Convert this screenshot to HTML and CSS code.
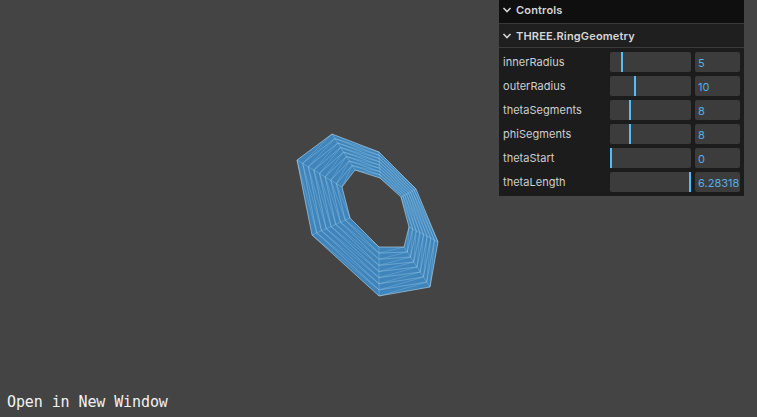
FILE: index.html
```html
<!DOCTYPE html>
<html lang="en">
<head>
<meta charset="utf-8">
<title>THREE.RingGeometry</title>
<link rel="stylesheet" href="styles.css">
</head>
<body>
<svg class="scene" id="scene" width="757" height="417" viewBox="0 0 757 417" aria-hidden="true"></svg>
<aside class="panel">
  <div class="head head-root">
    <svg class="chev" width="8" height="6" viewBox="0 0 8 6"><path d="M.5 .9 4 4.6 7.5 .9"/></svg>
    <span>Controls</span>
  </div>
  <div class="head head-folder">
    <svg class="chev" width="8" height="6" viewBox="0 0 8 6"><path d="M.5 .9 4 4.6 7.5 .9"/></svg>
    <span>THREE.RingGeometry</span>
  </div>
  <div class="rows">
    <span class="label">innerRadius</span><div class="slider"><i class="mark" style="left:13.6%"></i></div><div class="value">5</div>
    <span class="label">outerRadius</span><div class="slider"><i class="mark" style="left:29.6%"></i></div><div class="value">10</div>
    <span class="label">thetaSegments</span><div class="slider"><i class="mark" style="left:23.5%"></i></div><div class="value">8</div>
    <span class="label">phiSegments</span><div class="slider"><i class="mark" style="left:23.5%"></i></div><div class="value">8</div>
    <span class="label">thetaStart</span><div class="slider"><i class="mark" style="left:0"></i></div><div class="value">0</div>
    <span class="label">thetaLength</span><div class="slider"><i class="mark" style="left:97.5%"></i></div><div class="value">6.28318</div>
  </div>
</aside>
<a class="open" href="#">Open in New Window</a>
<script src="ring.js"></script>
</body>
</html>
```
FILE: styles.css
```css
* { box-sizing: border-box; }
html, body { margin: 0; height: 100%; }
body {
  background: #444444;
  overflow: hidden;
  position: relative;
  font-family: Inter, "Liberation Sans", sans-serif;
}
.scene { position: absolute; left: 0; top: 0; display: block; }
.panel {
  position: absolute;
  left: 499px;
  top: 0;
  width: 245px;
  background: #1c1c1c;
  color: #cfcfcf;
  font-size: 11px;
  letter-spacing: 0.03px;
}
.head {
  height: 24px;
  display: flex;
  align-items: center;
  gap: 5px;
  padding-left: 4px;
  border-bottom: 1px solid #3a3a3a;
  font-weight: 600;
  letter-spacing: 0.17px;
  color: #d6d6d6;
}
.head-root { background: #0f0f0f; padding-bottom: 3px; }
.head-folder { background: #1f1f1f; padding-top: 1px; }
.chev { fill: none; stroke: #d6d6d6; stroke-width: 1.5; flex: none; }
.rows {
  display: grid;
  grid-template-columns: 103px 81px 45px;
  grid-auto-rows: 20px;
  gap: 4px;
  padding: 4px;
  align-items: center;
}
.label { white-space: nowrap; }
.slider {
  position: relative;
  height: 20px;
  background: #3c3c3c;
  border-radius: 2px;
}
.mark {
  position: absolute;
  top: 0;
  bottom: 0;
  width: 2px;
  background: #55bdf5;
}
.value {
  height: 20px;
  line-height: 22px;
  padding-left: 3px;
  background: #3c3c3c;
  border-radius: 2px;
  color: #58aee3;
  white-space: nowrap;
  overflow: hidden;
}
.open {
  position: absolute;
  left: 7px;
  top: 393px;
  color: #f2f2f2;
  text-decoration: none;
  letter-spacing: -0.1px;
  font: 15px/18px "DejaVu Sans Mono", monospace;
}
```
FILE: ring.js
```js
var outer = [[297,160],[332,134],[379,152],[416,189],[438,242],[430,287],[379,296],[312,235]];
var inner = [[342,187],[355,170],[380,178],[401,197],[409,227],[404,247],[379,247],[350,218]];
var NS = "http://www.w3.org/2000/svg";
var svg = document.getElementById("scene");
var N = 8, PHI = 8;

function lerp(a, b, t) { return [a[0] + (b[0] - a[0]) * t, a[1] + (b[1] - a[1]) * t]; }
function add(tag, attrs) {
  var el = document.createElementNS(NS, tag);
  for (var k in attrs) el.setAttribute(k, attrs[k]);
  svg.appendChild(el);
}
function pts(list) { return list.map(function (p) { return p[0] + "," + p[1]; }).join(" "); }
function line(a, b, color, width, opacity) {
  add("line", { x1: a[0], y1: a[1], x2: b[0], y2: b[1], stroke: color, "stroke-width": width, "stroke-opacity": opacity });
}

var rings = [];
for (var r = 0; r <= PHI; r++) {
  rings.push(inner.map(function (p, i) { return lerp(p, outer[i], r / PHI); }));
}

add("path", {
  d: "M" + outer.map(function (p) { return p.join(" "); }).join("L") + "Z" +
     "M" + inner.map(function (p) { return p.join(" "); }).join("L") + "Z",
  fill: "#3f85bb",
  "fill-rule": "evenodd"
});

for (var k = 0; k < PHI; k++) {
  for (var i = 0; i < N; i++) {
    line(rings[k][i], rings[k + 1][(i + 1) % N], "#9ccbea", 0.6, 0.5);
  }
}
for (var m = 1; m < PHI; m++) {
  add("polygon", { points: pts(rings[m]), fill: "none", stroke: "#a9d3ee", "stroke-width": 0.7, "stroke-opacity": 0.55 });
}
for (var s = 0; s < N; s++) {
  line(inner[s], outer[s], "#a9d3ee", 0.7, 0.45);
}
add("polygon", { points: pts(outer), fill: "none", stroke: "#b9dcf2", "stroke-width": 0.7, "stroke-opacity": 0.85 });
add("polygon", { points: pts(inner), fill: "none", stroke: "#b9dcf2", "stroke-width": 0.7, "stroke-opacity": 0.85 });
```
